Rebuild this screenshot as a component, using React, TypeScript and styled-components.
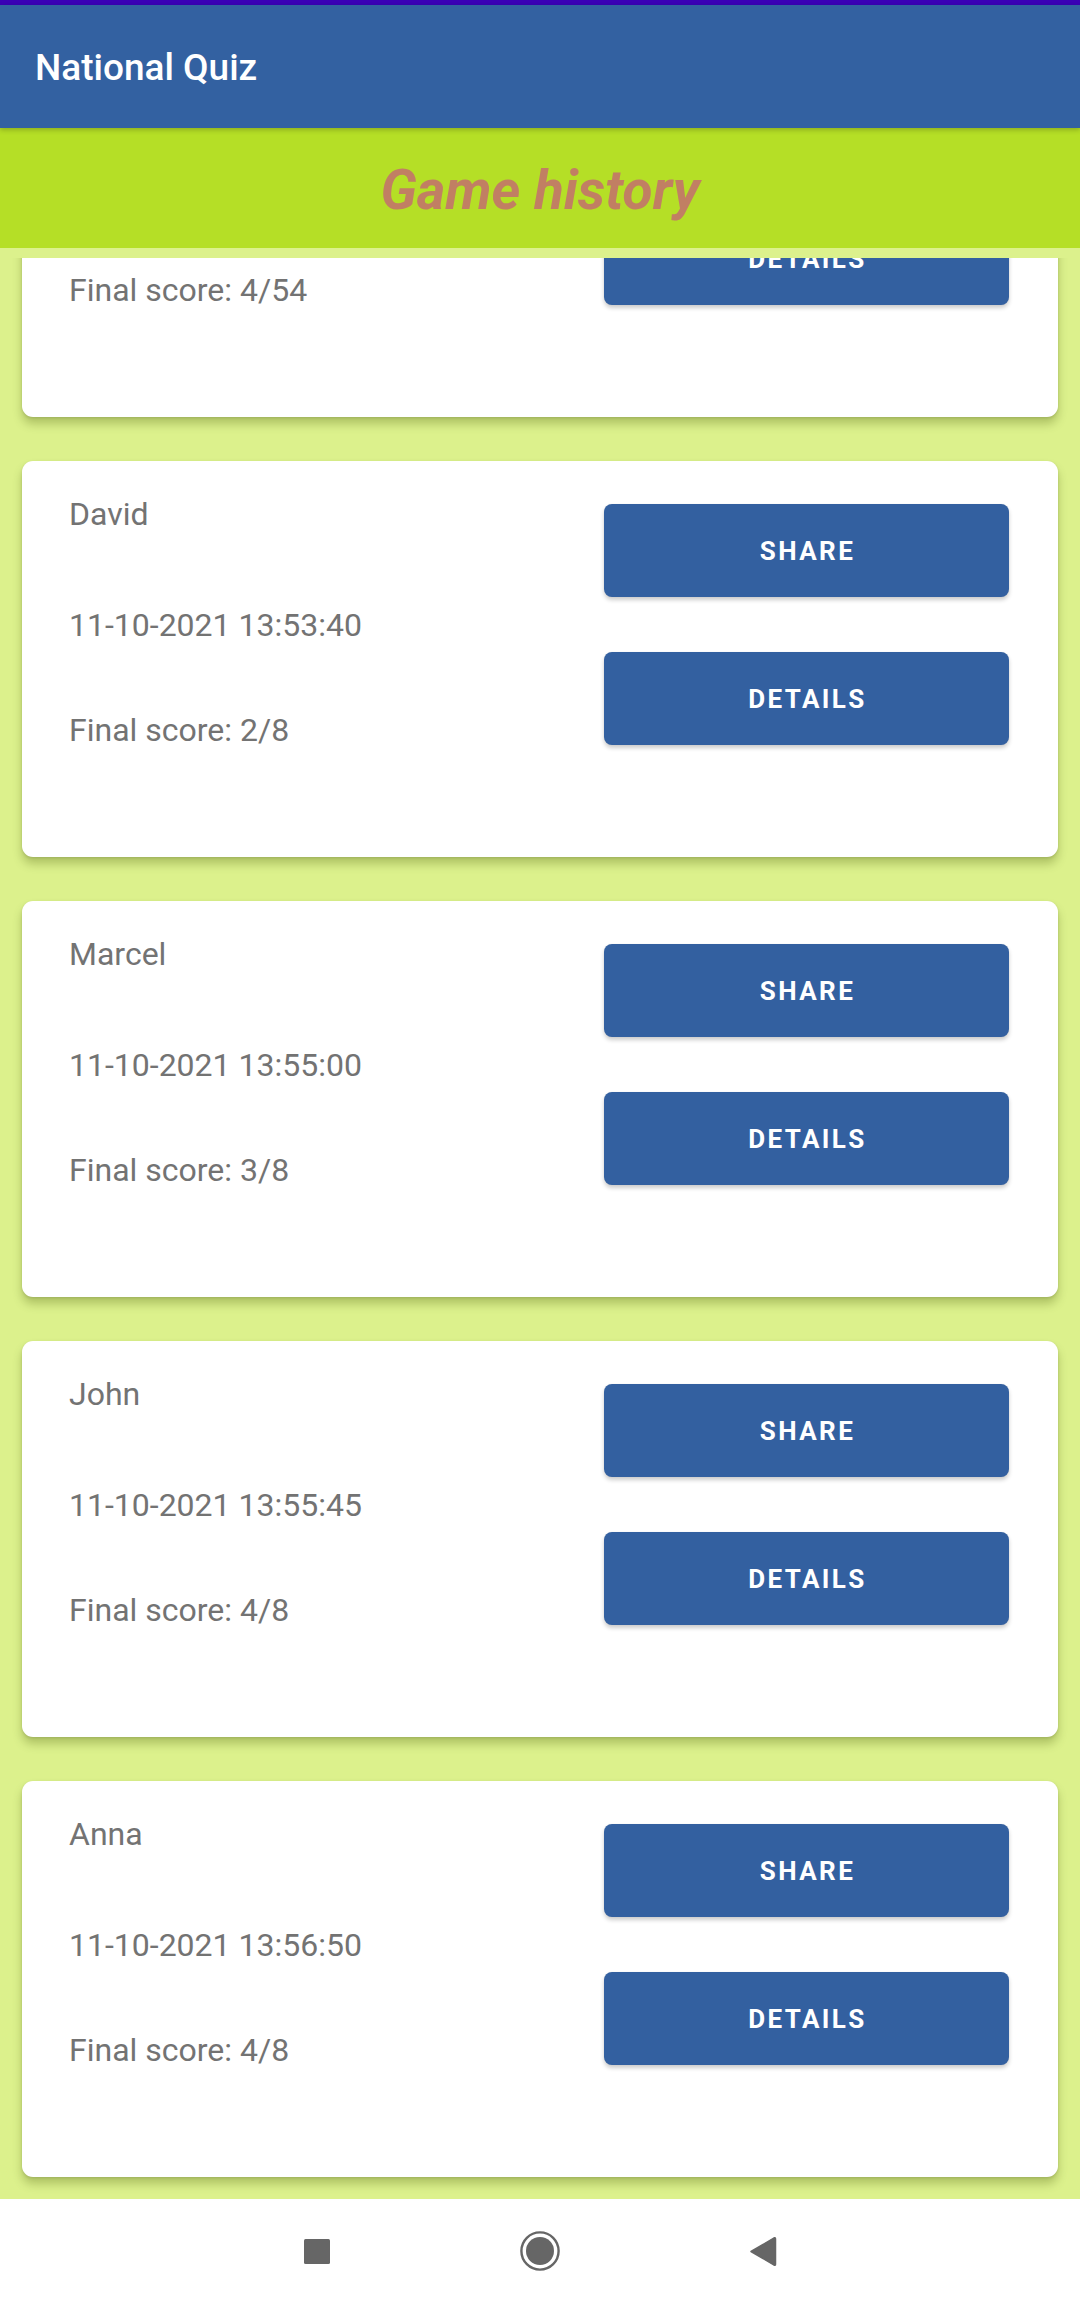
import React, { useLayoutEffect, useRef } from "react";
import styled, { createGlobalStyle } from "styled-components";

const GlobalStyle = createGlobalStyle`
  html, body { margin: 0; padding: 0; background: #ffffff; }
  body { font-family: Roboto, "Noto Sans", "Liberation Sans", sans-serif; }
  * { box-sizing: border-box; }
`;

const Screen = styled.div`
  width: 1080px;
  height: 2303px;
  display: flex;
  flex-direction: column;
  overflow: hidden;
  background: #ffffff;
`;

const StatusStrip = styled.div`
  height: 5px;
  flex: none;
  background: #3a00b5;
`;

const AppBar = styled.header`
  height: 123px;
  flex: none;
  display: flex;
  align-items: center;
  padding-left: 35px;
  background: #3361a1;
  position: relative;
  z-index: 2;
  box-shadow: 0 2px 5px rgba(0, 0, 0, 0.22);
`;

const AppTitle = styled.h1`
  margin: 0;
  font-family: Roboto, "Liberation Sans", sans-serif;
  font-weight: 500;
  font-size: 37px;
  color: #ffffff;
  padding-top: 2px;
`;

const Banner = styled.div`
  height: 120px;
  flex: none;
  display: flex;
  align-items: center;
  justify-content: center;
  background: #b5df26;
  position: relative;
  z-index: 1;
`;

const BannerTitle = styled.h2`
  margin: 0;
  padding-top: 4px;
  font-family: Roboto, "Liberation Sans", sans-serif;
  font-weight: 700;
  font-style: italic;
  font-size: 55px;
  color: #c17f63;
`;

const ListFrame = styled.main`
  flex: 1;
  min-height: 0;
  display: flex;
  flex-direction: column;
  padding-top: 10px;
  background: #dcf18c;
`;

const Viewport = styled.div`
  flex: 1;
  min-height: 0;
  overflow: hidden;
`;

const CardList = styled.div`
  display: flex;
  flex-direction: column;
  gap: 44px;
  padding: 22px;
`;

const Card = styled.article`
  height: 396px;
  flex: none;
  display: flex;
  justify-content: space-between;
  background: #ffffff;
  border-radius: 11px;
  box-shadow: 0 7px 10px rgba(60, 80, 0, 0.28), 0 1px 3px rgba(0, 0, 0, 0.12);
`;

const Info = styled.div`
  display: flex;
  flex-direction: column;
  padding: 35px 0 0 47px;
`;

const InfoLine = styled.div<{ $space: number }>`
  margin-top: ${(p) => p.$space}px;
  font-family: Roboto, "Liberation Sans", sans-serif;
  font-size: 32px;
  line-height: 37.5px;
  color: #737373;
  white-space: nowrap;
`;

const Actions = styled.div`
  display: flex;
  flex-direction: column;
  gap: 55px;
  padding: 43px 49px 0 0;
`;

const ActionButton = styled.button`
  width: 405px;
  height: 93px;
  border: none;
  border-radius: 8px;
  background: #3360a0;
  color: #ffffff;
  font-family: Roboto, "Liberation Sans", sans-serif;
  font-weight: 700;
  font-size: 26px;
  letter-spacing: 2.4px;
  text-transform: uppercase;
  padding: 0 0 0 2px;
  box-shadow: 0 3px 4px rgba(0, 0, 0, 0.2), 0 0 1px rgba(0, 0, 0, 0.1);
  cursor: pointer;
`;

const NavBar = styled.nav`
  height: 104px;
  flex: none;
  display: flex;
  justify-content: center;
  align-items: center;
  background: #ffffff;
`;

const NavSlot = styled.div`
  width: 223px;
  display: flex;
  justify-content: center;
  align-items: center;
`;

const RecentsSquare = styled.div`
  width: 26px;
  height: 25px;
  border-radius: 1.5px;
  background: #666666;
`;

type Game = { name: string; date: string; score: string };

const games: Game[] = [
  { name: "Peter", date: "11-10-2021 13:50:12", score: "Final score: 4/54" },
  { name: "David", date: "11-10-2021 13:53:40", score: "Final score: 2/8" },
  { name: "Marcel", date: "11-10-2021 13:55:00", score: "Final score: 3/8" },
  { name: "John", date: "11-10-2021 13:55:45", score: "Final score: 4/8" },
  { name: "Anna", date: "11-10-2021 13:56:50", score: "Final score: 4/8" },
];

function GameCard({ game }: { game: Game }) {
  return (
    <Card>
      <Info>
        <InfoLine $space={0}>{game.name}</InfoLine>
        <InfoLine $space={73}>{game.date}</InfoLine>
        <InfoLine $space={68}>{game.score}</InfoLine>
      </Info>
      <Actions>
        <ActionButton>Share</ActionButton>
        <ActionButton>Details</ActionButton>
      </Actions>
    </Card>
  );
}

export default function App() {
  const viewportRef = useRef<HTMLDivElement>(null);

  useLayoutEffect(() => {
    const el = viewportRef.current;
    if (el) el.scrollTop = el.scrollHeight;
  }, []);

  return (
    <>
      <GlobalStyle />
      <Screen>
        <StatusStrip />
        <AppBar>
          <AppTitle>National Quiz</AppTitle>
        </AppBar>
        <Banner>
          <BannerTitle>Game history</BannerTitle>
        </Banner>
        <ListFrame>
          <Viewport ref={viewportRef}>
            <CardList>
              {games.map((g) => (
                <GameCard key={g.name + g.date} game={g} />
              ))}
            </CardList>
          </Viewport>
        </ListFrame>
        <NavBar>
          <NavSlot>
            <RecentsSquare />
          </NavSlot>
          <NavSlot>
            <svg width="42" height="42" viewBox="0 0 42 42">
              <circle cx="21" cy="21" r="18.6" fill="none" stroke="#666666" strokeWidth="2.4" />
              <circle cx="21" cy="21" r="14" fill="#666666" />
            </svg>
          </NavSlot>
          <NavSlot>
            <svg width="28" height="31" viewBox="0 0 28 31">
              <path
                d="M2 15.5 L25.2 1.8 Q26.5 1.2 26.5 2.8 L26.5 28.2 Q26.5 29.8 25.2 29.2 Z"
                fill="#666666"
                stroke="#666666"
                strokeWidth="1.5"
                strokeLinejoin="round"
              />
            </svg>
          </NavSlot>
        </NavBar>
      </Screen>
    </>
  );
}
